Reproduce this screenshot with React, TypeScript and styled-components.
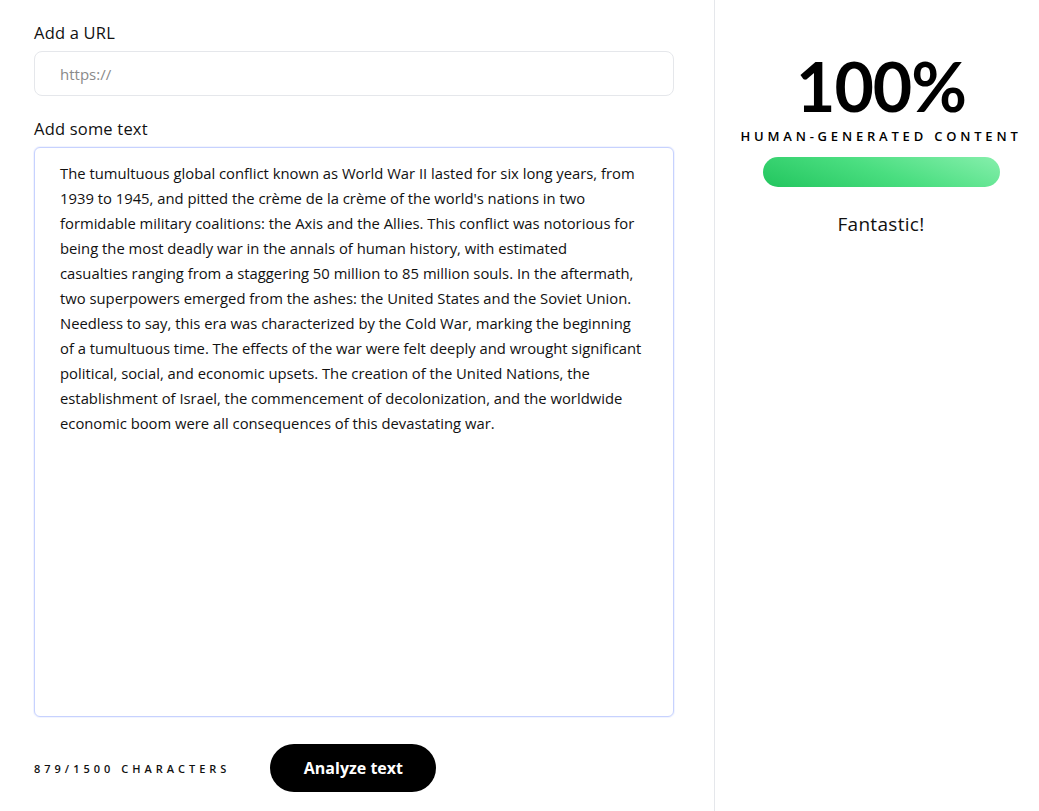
import React from 'react';
import styled, { createGlobalStyle } from 'styled-components';

const GlobalStyle = createGlobalStyle`
  * { box-sizing: border-box; }
  html, body { margin: 0; padding: 0; background: #ffffff; }
  body {
    font-family: "Open Sans", "Liberation Sans", sans-serif;
    color: #111111;
  }
`;

const lines = [
  'The tumultuous global conflict known as World War II lasted for six long years, from',
  "1939 to 1945, and pitted the crème de la crème of the world's nations in two",
  'formidable military coalitions: the Axis and the Allies. This conflict was notorious for',
  'being the most deadly war in the annals of human history, with estimated',
  'casualties ranging from a staggering 50 million to 85 million souls. In the aftermath,',
  'two superpowers emerged from the ashes: the United States and the Soviet Union.',
  'Needless to say, this era was characterized by the Cold War, marking the beginning',
  'of a tumultuous time. The effects of the war were felt deeply and wrought significant',
  'political, social, and economic upsets. The creation of the United Nations, the',
  'establishment of Israel, the commencement of decolonization, and the worldwide',
  'economic boom were all consequences of this devastating war.',
];

const App = () => {
  return (
    <>
      <GlobalStyle />
      <Page>
        <Editor>
          <Label>Add a URL</Label>
          <UrlInput placeholder="https://" />
          <Label $spaced>Add some text</Label>
          <TextArea wrap="off" defaultValue={lines.join('\n')} spellCheck={false} />
          <Footer>
            <Counter>879/1500 characters</Counter>
            <AnalyzeButton>Analyze text</AnalyzeButton>
          </Footer>
        </Editor>
        <Result>
          <Score>100%</Score>
          <ScoreLabel>Human-generated content</ScoreLabel>
          <Bar />
          <Verdict>Fantastic!</Verdict>
        </Result>
      </Page>
    </>
  );
};

export default App;

const Page = styled.div`
  display: grid;
  grid-template-columns: 714px 1fr;
  min-height: 811px;
`;

const Editor = styled.div`
  display: flex;
  flex-direction: column;
  padding: 23px 40px 0 34px;
`;

const Label = styled.label<{ $spaced?: boolean }>`
  font-size: 16.5px;
  line-height: 20px;
  font-weight: 500;
  letter-spacing: 0.2px;
  color: #111111;
  margin-top: ${(p) => (p.$spaced ? '23px' : '0')};
  margin-bottom: 8px;
`;

const UrlInput = styled.input`
  height: 45px;
  width: 100%;
  border: 1px solid #e5e7eb;
  border-radius: 8px;
  padding: 0 25px;
  font-family: inherit;
  font-size: 15px;
  color: #111111;
  outline: none;
  &::placeholder {
    color: #8a8a8a;
  }
`;

const TextArea = styled.textarea`
  height: 570px;
  width: 100%;
  border: 1px solid #c7d2fe;
  border-radius: 6px;
  padding: 13px 25px;
  font-family: inherit;
  font-size: 14.8px;
  line-height: 25px;
  color: #111111;
  resize: none;
  outline: none;
  overflow: hidden;
  white-space: pre;
  box-shadow: 0 0 0 1px rgba(199, 210, 254, 0.25);
`;

const Footer = styled.div`
  display: flex;
  align-items: center;
  gap: 40px;
  margin-top: 27px;
`;

const Counter = styled.span`
  font-size: 11px;
  font-weight: 600;
  letter-spacing: 4px;
  text-transform: uppercase;
  color: #111111;
`;

const AnalyzeButton = styled.button`
  width: 166px;
  height: 48px;
  border: none;
  border-radius: 24px;
  background: #000000;
  color: #ffffff;
  font-family: inherit;
  font-size: 16px;
  font-weight: 700;
  cursor: pointer;
`;

const Result = styled.div`
  border-left: 1px solid #e5e7eb;
  display: flex;
  flex-direction: column;
  align-items: center;
  padding: 48px 0 0 8px;
`;

const Score = styled.div`
  font-family: Lato, "Open Sans", sans-serif;
  font-size: 68px;
  line-height: 76px;
  font-weight: 700;
  letter-spacing: -1px;
  color: #000000;
`;

const ScoreLabel = styled.div`
  margin-top: 3px;
  font-size: 13px;
  line-height: 18px;
  font-weight: 600;
  letter-spacing: 3.8px;
  text-transform: uppercase;
  color: #000000;
`;

const Bar = styled.div`
  margin-top: 12px;
  width: 237px;
  height: 30px;
  border-radius: 15px;
  background: linear-gradient(200deg, #86efac 0%, #4ade80 50%, #22c55e 100%);
`;

const Verdict = styled.div`
  margin-top: 25px;
  font-size: 19px;
  line-height: 24px;
  letter-spacing: 0.3px;
  color: #111111;
`;
